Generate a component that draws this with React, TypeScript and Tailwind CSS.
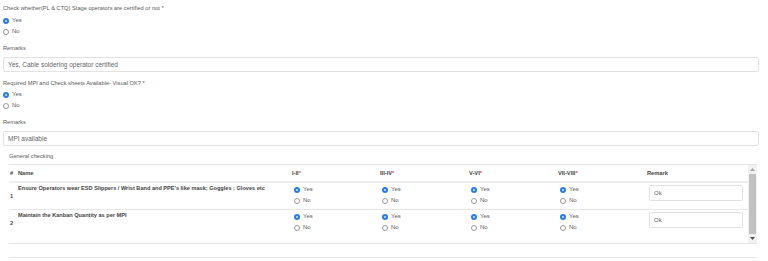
import React from "react";

function Radio({ checked, label }: { checked?: boolean; label: string }) {
  return (
    <div className="flex h-[11px] items-center gap-[3px]">
      {checked ? (
        <span className="flex h-[6px] w-[6px] items-center justify-center rounded-full bg-[#2a7de9]">
          <span className="h-[2px] w-[2px] rounded-full bg-[#d6e6fb]" />
        </span>
      ) : (
        <span className="h-[6px] w-[6px] rounded-full border border-[#9a9a9a] bg-white" />
      )}
      <span className="text-[6px] leading-[7px] text-[#5a5a5a]">{label}</span>
    </div>
  );
}

function TextBox({ value }: { value: string }) {
  return (
    <div className="mt-[5px] flex h-[15px] items-center rounded-[2px] border border-[#e2e2e2] pl-[4px] text-[6.5px] text-[#666]">
      {value}
    </div>
  );
}

const rows = [
  { n: "1", name: "Ensure Operators wear ESD Slippers / Wrist Band and PPE's like mask; Goggles ; Gloves etc" },
  { n: "2", name: "Maintain the Kanban Quantity as per MPI" },
];

const cols = ["I-II", "III-IV", "V-VI", "VII-VIII"];

export default function App() {
  return (
    <div className="h-[261px] w-[768px] overflow-hidden bg-white font-['Liberation_Sans',Arial,sans-serif] text-[#5a5a5a]">
      <div className="pl-[3px] pr-[9px]">
        <div className="pt-[5px] text-[5.7px] leading-[7px]">
          Check whether(PL &amp; CTQ) Stage operators are certified or not *
        </div>
        <div className="mt-[3px]">
          <Radio checked label="Yes" />
          <Radio label="No" />
        </div>
        <div className="mt-[8px] text-[5.7px] leading-[7px]">Remarks</div>
        <TextBox value="Yes, Cable soldering operator certified" />
        <div className="mt-[8px] text-[5.7px] leading-[7px]">
          Required MPI and Check sheets Available- Visual OK? *
        </div>
        <div className="mt-[2px]">
          <Radio checked label="Yes" />
          <Radio label="No" />
        </div>
        <div className="mt-[8px] text-[5.7px] leading-[7px]">Remarks</div>
        <TextBox value="MPI available" />
      </div>

      <div className="ml-[9px] w-[748px]">
        <div className="mt-[7px] text-[5.7px] leading-[7px]">General checking</div>
        <div className="mt-[4px] flex h-[80px] border-b border-t border-[#e6e6e6]">
          <div className="w-[739px]">
            <div className="grid h-[18px] grid-cols-[9px_274px_88px_89px_89px_89px_101px] items-center border-b-2 border-[#ededed] text-[5.7px] font-bold text-[#444]">
              <div className="pl-[1px]">#</div>
              <div>Name</div>
              {cols.map((c) => (
                <div key={c}>
                  {c}
                  <span className="text-[#e44]">*</span>
                </div>
              ))}
              <div>Remark</div>
            </div>
            {rows.map((r, i) => (
              <div
                key={r.n}
                className={`grid h-[27px] grid-cols-[9px_274px_88px_89px_89px_89px_101px] ${
                  i === 0 ? "border-b border-[#e6e6e6]" : ""
                }`}
              >
                <div className="flex items-center pl-[1px] text-[5.7px] font-bold text-[#444]">{r.n}</div>
                <div className="pt-[2px] text-[5.6px] font-bold leading-[7px] text-[#444]">{r.name}</div>
                {cols.map((c) => (
                  <div key={c} className="pl-[2px] pt-[1px]">
                    <Radio checked label="Yes" />
                    <Radio label="No" />
                  </div>
                ))}
                <div className="pl-[2px] pr-[5px] pt-[2px]">
                  <div className="flex h-[16px] items-center rounded-[2px] border border-[#e2e2e2] pl-[4px] text-[6px] text-[#666]">
                    Ok
                  </div>
                </div>
              </div>
            ))}
          </div>
          <div className="flex w-[9px] flex-col bg-[#f1f1f1]">
            <div className="flex h-[9px] items-center justify-center">
              <svg width="5" height="3" viewBox="0 0 5 3">
                <path d="M0 3 L2.5 0 L5 3 Z" fill="#a3a3a3" />
              </svg>
            </div>
            <div className="mx-[1px] flex-1 bg-[#c1c1c1]" />
            <div className="flex h-[9px] items-center justify-center">
              <svg width="5" height="3" viewBox="0 0 5 3">
                <path d="M0 0 L2.5 3 L5 0 Z" fill="#505050" />
              </svg>
            </div>
          </div>
        </div>
        <div className="mt-[13px] border-t border-[#e6e6e6]" />
      </div>
    </div>
  );
}
